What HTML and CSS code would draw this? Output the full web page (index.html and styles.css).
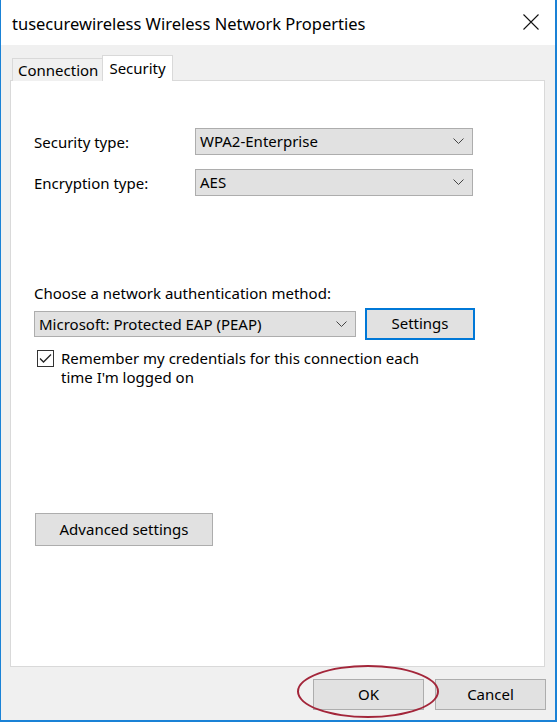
FILE: index.html
```html
<!DOCTYPE html>
<html>
<head>
<meta charset="utf-8">
<link rel="stylesheet" href="styles.css">
</head>
<body>
<div class="window">
  <div class="titlebar">
    <div class="title">tusecurewireless Wireless Network Properties</div>
    <svg class="close" width="16" height="16" viewBox="0 0 16 16"><path d="M0.5 0.5 L15.5 15.5 M15.5 0.5 L0.5 15.5" stroke="#111" stroke-width="1.1" fill="none"/></svg>
  </div>
  <div class="client">
    <div class="tabs">
      <div class="tab">Connection</div>
      <div class="tab active">Security</div>
    </div>
    <div class="panel">
      <div class="row">
        <div class="label">Security type:</div>
        <div class="select wide"><span>WPA2-Enterprise</span><svg class="chev" width="11" height="6" viewBox="0 0 11 6"><path d="M0.5 0.5 L5.5 5.5 L10.5 0.5" stroke="#444" stroke-width="1" fill="none"/></svg></div>
      </div>
      <div class="row row2">
        <div class="label">Encryption type:</div>
        <div class="select wide"><span>AES</span><svg class="chev" width="11" height="6" viewBox="0 0 11 6"><path d="M0.5 0.5 L5.5 5.5 L10.5 0.5" stroke="#444" stroke-width="1" fill="none"/></svg></div>
      </div>
      <div class="choose">Choose a network authentication method:</div>
      <div class="authrow">
        <div class="select auth"><span>Microsoft: Protected EAP (PEAP)</span><svg class="chev" width="11" height="6" viewBox="0 0 11 6"><path d="M0.5 0.5 L5.5 5.5 L10.5 0.5" stroke="#444" stroke-width="1" fill="none"/></svg></div>
        <div class="btn settings">Settings</div>
      </div>
      <div class="checkrow">
        <div class="checkbox"><svg width="13" height="11" viewBox="0 0 13 11"><path d="M1 5.5 L4.5 9 L12 1.5" stroke="#222" stroke-width="1.3" fill="none"/></svg></div>
        <div class="checktext">Remember my credentials for this connection each<br>time I'm logged on</div>
      </div>
      <div class="btn advanced">Advanced settings</div>
    </div>
    <div class="footer">
      <div class="btn dlg">OK</div>
      <div class="btn dlg">Cancel</div>
    </div>
  </div>
  <div class="highlight"></div>
</div>
</body>
</html>
```
FILE: styles.css
```css
html, body {
  margin: 0;
  padding: 0;
  background: #ffffff;
}
body {
  font-family: "Noto Sans", "Open Sans", sans-serif;
  font-size: 15px;
  color: #000;
}
.window {
  position: relative;
  width: 557px;
  height: 722px;
  box-sizing: border-box;
  border-left: 1px solid #1a82d6;
  border-right: 2px solid #1a82d6;
  border-bottom: 2px solid #1a82d6;
  background: #f0f0f0;
  overflow: hidden;
}
.titlebar {
  height: 45px;
  background: #ffffff;
  display: flex;
  align-items: center;
  justify-content: space-between;
  padding: 0 16px 0 11px;
}
.title {
  font-size: 16.5px;
  color: #000;
  margin-top: 1px;
}
.close {
  margin-top: -1px;
}
.client {
  display: flex;
  flex-direction: column;
}
.tabs {
  display: flex;
  align-items: flex-end;
  height: 36px;
  padding-left: 11px;
  position: relative;
  z-index: 1;
  margin-bottom: -1px;
}
.tab {
  height: 22px;
  line-height: 23px;
  padding: 0 4px 0 5px;
  border: 1px solid #d9d9d9;
  border-bottom: none;
  background: #f0f0f0;
  box-sizing: content-box;
}
.tab.active {
  height: 25px;
  line-height: 24px;
  background: #ffffff;
  margin-left: -1px;
  padding: 0 6px 0 6px;
}
.panel {
  margin: 0 10px 0 9px;
  height: 587px;
  box-sizing: border-box;
  border: 1px solid #d9d9d9;
  background: #ffffff;
  padding: 47px 0 0 23px;
}
.row {
  display: flex;
  align-items: center;
  height: 26px;
}
.row2 {
  margin-top: 15px;
}
.label {
  width: 161px;
  padding-top: 2px;
}
.select {
  box-sizing: border-box;
  display: flex;
  align-items: center;
  justify-content: space-between;
  background: #e1e1e1;
  border: 1px solid #adadad;
  padding: 0 8px 0 4px;
}
.select.wide {
  width: 278px;
  height: 27px;
}
.select.auth {
  width: 322px;
  height: 26px;
}
.chev {
  display: block;
}
.choose {
  margin-top: 88px;
  height: 21px;
  line-height: 21px;
}
.authrow {
  margin-top: 4px;
  display: flex;
  align-items: center;
  gap: 9px;
  height: 31px;
}
.btn {
  box-sizing: border-box;
  display: flex;
  align-items: center;
  justify-content: center;
  background: #e1e1e1;
  border: 1px solid #adadad;
  padding-bottom: 2px;
}
.settings {
  width: 110px;
  height: 32px;
  border: 2px solid #0078d7;
}
.checkrow {
  margin-top: 10px;
  display: flex;
  align-items: flex-start;
  padding-left: 3px;
}
.checkbox {
  box-sizing: border-box;
  width: 17px;
  height: 17px;
  border: 1px solid #333;
  background: #fff;
  display: flex;
  align-items: center;
  justify-content: center;
  margin-top: 1px;
  margin-right: 7px;
}
.checktext {
  line-height: 19px;
}
.advanced {
  margin-top: 126px;
  margin-left: 1px;
  width: 178px;
  height: 33px;
}
.footer {
  display: flex;
  justify-content: flex-end;
  gap: 11px;
  padding: 12px 9px 0 0;
}
.dlg {
  width: 111px;
  height: 31px;
}
.highlight {
  position: absolute;
  left: 296px;
  top: 665px;
  width: 142px;
  height: 53px;
  box-sizing: border-box;
  border: 2px solid #a3263a;
  border-radius: 50%;
}
```
